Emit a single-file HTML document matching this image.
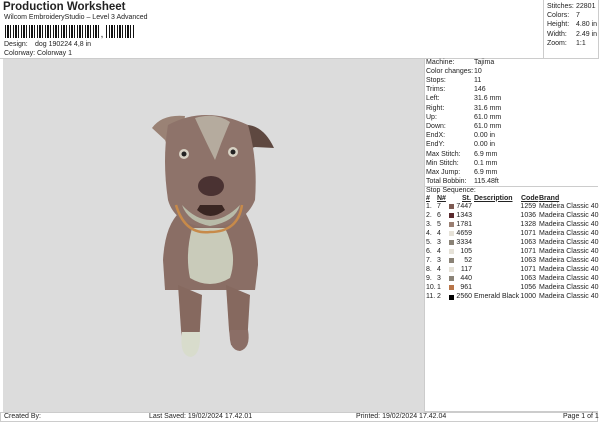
<!DOCTYPE html>
<html><head><style>
body{margin:0;width:600px;height:424px;background:#fff;font-family:"Liberation Sans",sans-serif;color:#222;position:relative;overflow:hidden}
div{position:absolute}
.t{font-size:7px;line-height:8.6px;white-space:nowrap}
.r{line-height:9.2px}
.s{line-height:9.1px}
</style></head><body>
<div style="left:3px;top:1px;font-size:11.5px;font-weight:bold;">Production Worksheet</div>
<div class="t" style="left:4px;top:14px">Wilcom EmbroideryStudio – Level 3 Advanced</div>
<div style="left:5px;top:25px;width:130px;height:13px;background:repeating-linear-gradient(90deg,#111 0 1px,#fff 1px 2px,#111 2px 4px,#fff 4px 5px,#111 5px 6px,#fff 6px 8px)"></div>
<div style="left:101px;top:25px;width:4px;height:13px;background:#fff"></div>
<div class="t" style="left:101px;top:32px;font-weight:bold">,</div>
<div class="t" style="left:4px;top:41px">Design:</div><div class="t" style="left:35px;top:41px">dog 190224 4,8 in</div>
<div class="t" style="left:4px;top:50px">Colorway:</div><div class="t" style="left:37px;top:50px">Colorway 1</div>
<div style="left:0;top:0;width:598px;height:58px;border:1px solid #ccc;border-top:none;border-left:none"></div>
<div style="left:543px;top:0;width:55px;height:58px;border-left:1px solid #ccc"></div>
<div class="t" style="left:547px;top:2px;line-height:9.2px">Stitches:<br>Colors:<br>Height:<br>Width:<br>Zoom:</div>
<div class="t" style="left:576px;top:2px;line-height:9.2px">22801<br>7<br>4.80 in<br>2.49 in<br>1:1</div>
<div style="left:3px;top:59px;width:421px;height:353px;background:#dcdcdc"></div>
<div style="left:424px;top:59px;width:174px;height:353px;border:1px solid #ccc;border-top:none;border-right:none;box-sizing:border-box"></div>
<div class="t r" style="left:426px;top:57.5px">Machine:<br>Color changes:<br>Stops:<br>Trims:<br>Left:<br>Right:<br>Up:<br>Down:<br>EndX:<br>EndY:<br>Max Stitch:<br>Min Stitch:<br>Max Jump:<br>Total Bobbin:<br>Stop Sequence:</div>
<div class="t r" style="left:474px;top:57.5px">Tajima<br>10<br>11<br>146<br>31.6 mm<br>31.6 mm<br>61.0 mm<br>61.0 mm<br>0.00 in<br>0.00 in<br>6.9 mm<br>0.1 mm<br>6.9 mm<br>115.48ft</div>
<div style="left:424px;top:186px;width:174px;border-top:1px solid #ccc"></div>
<div class="t" style="left:426px;top:194.5px;font-weight:bold;text-decoration:underline">#</div>
<div class="t" style="left:437px;top:194.5px;font-weight:bold;text-decoration:underline">N#</div>
<div class="t" style="left:462px;top:194.5px;font-weight:bold;text-decoration:underline">St.</div>
<div class="t" style="left:474px;top:194.5px;font-weight:bold;text-decoration:underline">Description</div>
<div class="t" style="left:521px;top:194.5px;font-weight:bold;text-decoration:underline">Code</div>
<div class="t" style="left:539px;top:194.5px;font-weight:bold;text-decoration:underline">Brand</div>
<div class="t s" style="left:426px;top:201.5px">1.<br>2.<br>3.<br>4.<br>5.<br>6.<br>7.<br>8.<br>9.<br>10.<br>11.</div>
<div class="t s" style="left:437px;top:201.5px">7<br>6<br>5<br>4<br>3<br>4<br>3<br>4<br>3<br>1<br>2</div>
<div class="t s" style="left:452px;top:201.5px;text-align:right;width:20px">7447<br>1343<br>1781<br>4659<br>3334<br>105<br>52<br>117<br>440<br>961<br>2560</div>
<div class="t s" style="left:474px;top:201.5px"><br><br><br><br><br><br><br><br><br><br>Emerald Black</div>
<div class="t s" style="left:518px;top:201.5px;text-align:right;width:18px">1259<br>1036<br>1328<br>1071<br>1063<br>1071<br>1063<br>1071<br>1063<br>1056<br>1000</div>
<div class="t s" style="left:539px;top:201.5px">Madeira Classic 40<br>Madeira Classic 40<br>Madeira Classic 40<br>Madeira Classic 40<br>Madeira Classic 40<br>Madeira Classic 40<br>Madeira Classic 40<br>Madeira Classic 40<br>Madeira Classic 40<br>Madeira Classic 40<br>Madeira Classic 40</div>
<div style="left:449px;top:203.5px;width:5px;height:5px;background:#7d5a52"></div>
<div style="left:449px;top:212.6px;width:5px;height:5px;background:#5a2a2e"></div>
<div style="left:449px;top:221.7px;width:5px;height:5px;background:#9a7f72"></div>
<div style="left:449px;top:230.8px;width:5px;height:5px;background:#e6e2d8"></div>
<div style="left:449px;top:239.9px;width:5px;height:5px;background:#8a8276"></div>
<div style="left:449px;top:249px;width:5px;height:5px;background:#e6e2d8"></div>
<div style="left:449px;top:258.1px;width:5px;height:5px;background:#8a8276"></div>
<div style="left:449px;top:267.2px;width:5px;height:5px;background:#e6e2d8"></div>
<div style="left:449px;top:276.3px;width:5px;height:5px;background:#8a8276"></div>
<div style="left:449px;top:285.4px;width:5px;height:5px;background:#b87548"></div>
<div style="left:449px;top:294.5px;width:5px;height:5px;background:#000"></div>
<svg style="position:absolute;left:0;top:0" width="600" height="424">
<g>
<path d="M165 290 L163 260 Q165 225 180 212 L245 212 Q258 235 258 265 L255 290 Z" fill="#8a6e65"/>
<path d="M178 285 L181 330 L183 345 L199 345 L202 295 Z" fill="#86695f"/>
<path d="M226 285 L229 330 L231 345 L247 345 L250 295 Z" fill="#86695f"/>
<path d="M182 332 Q179 356 191 357 Q201 355 200 332 Z" fill="#d8dccc"/>
<path d="M230 330 Q228 350 240 351 Q251 348 248 330 Z" fill="#8b6e66"/>
<path d="M192 228 Q185 255 190 278 Q210 290 230 278 Q238 255 225 228 Z" fill="#c9cbba"/>
<path d="M152 128 Q162 114 185 116 L180 150 Q170 155 165 140 Z" fill="#9a8275"/>
<path d="M240 125 Q262 122 274 148 L255 147 L246 150 Z" fill="#5e4840"/>
<path d="M168 125 Q205 105 248 125 Q258 160 255 200 Q245 225 210 228 Q175 225 168 200 Q162 160 168 125 Z" fill="#8e736a"/>
<path d="M195 118 Q215 112 230 122 Q222 140 215 160 Q205 140 195 118 Z" fill="#b5ab9e"/>
<path d="M182 205 Q210 235 240 205 Q235 222 210 226 Q188 222 182 205 Z" fill="#b8bba8"/>
<path d="M176 205 Q185 235 210 232 Q238 232 242 205" fill="none" stroke="#c78a4a" stroke-width="2.5"/>
<ellipse cx="184" cy="154" rx="5" ry="5" fill="#d8d2c4"/><circle cx="184" cy="154" r="2.5" fill="#222"/>
<ellipse cx="233" cy="152" rx="5" ry="5" fill="#d8d2c4"/><circle cx="233" cy="152" r="2.5" fill="#222"/>
<ellipse cx="211" cy="186" rx="13" ry="10" fill="#4a3232"/>
<path d="M197 210 Q210 222 225 210 L222 205 L200 205 Z" fill="#3a2622"/>
</g>
</svg>
<div style="left:0;top:412px;width:598px;height:10px;border:1px solid #ccc;box-sizing:border-box"></div>
<div class="t" style="left:4px;top:413px">Created By:</div>
<div class="t" style="left:149px;top:413px">Last Saved: 19/02/2024 17.42.01</div>
<div class="t" style="left:356px;top:413px">Printed: 19/02/2024 17.42.04</div>
<div class="t" style="left:563px;top:413px">Page 1 of 1</div>
</body></html>
